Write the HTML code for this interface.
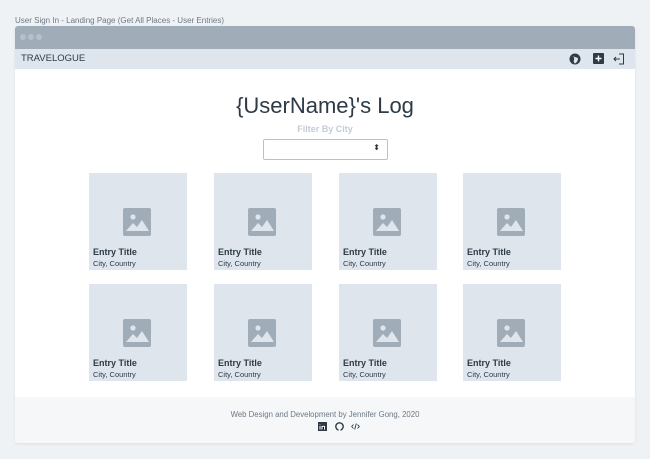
<!DOCTYPE html>
<html><head><style>
*{margin:0;padding:0;box-sizing:border-box}
body{width:650px;height:459px;background:#eff2f5;font-family:"Liberation Sans",sans-serif;position:relative;overflow:hidden;color:#2e3a46}
.cap{position:absolute;left:15px;top:16px;font-size:8px;color:#6c7986}
.win{position:absolute;left:15px;top:26px;width:620px;height:417px;background:#fff;border-radius:3px;overflow:hidden;box-shadow:0 1px 3px rgba(0,0,0,.08)}
.tb{height:23px;background:#a0adb8;position:relative}
.tb i{position:absolute;top:8px;width:6px;height:6px;border-radius:50%;background:#b6c0ca}
.nav{height:20px;background:#dfe5ec;position:relative;font-size:9.5px;line-height:20px;padding-left:6px;color:#2e3a46}
.h1{position:absolute;top:67px;width:100%;text-align:center;font-size:22px;color:#2e3a46}
.fl{position:absolute;top:98px;width:100%;text-align:center;font-size:9px;font-weight:bold;color:#c3ccd6}
.sel{position:absolute;left:248px;top:113px;width:125px;height:21px;border:1px solid #b9c2cc;border-radius:2px}
.sel span{position:absolute;right:7px;top:3px;font-size:8px;color:#333}
.card{position:absolute;width:98px;height:97px;background:#dfe5ec}
.card svg{position:absolute;left:34px;top:35px}
.card b{position:absolute;left:4px;top:74px;font-size:9px;color:#2e3a46}
.card em{position:absolute;left:4px;top:86px;font-size:7.5px;font-style:normal;color:#2e3a46}
.ft{position:absolute;left:0;top:371px;width:620px;height:46px;background:#f5f7f9;text-align:center}
.ft p{font-size:7.8px;color:#6c7986;margin-top:13px}
</style></head><body>
<div class="cap">User Sign In - Landing Page (Get All Places - User Entries)</div>
<div class="win">
<div class="tb"><i style="left:5px"></i><i style="left:13px"></i><i style="left:21px"></i></div>
<div class="nav">TRAVELOGUE
<svg style="position:absolute;left:554px;top:4px" width="12" height="12" viewBox="0 0 12 12"><circle cx="6" cy="6" r="5.5" fill="#2e3a46"/><path d="M3 3 Q6 4 5 7 Q4 9 6 10.5 Q9 9 9 5" fill="#dfe5ec"/></svg>
<svg style="position:absolute;left:578px;top:4px" width="11" height="11" viewBox="0 0 11 11"><rect width="11" height="11" rx="1" fill="#2e3a46"/><path d="M5.5 2.5v6M2.5 5.5h6" stroke="#fff" stroke-width="1.4"/></svg>
<svg style="position:absolute;left:598px;top:4px" width="12" height="12" viewBox="0 0 12 12" fill="none" stroke="#2e3a46" stroke-width="1"><path d="M6 1h4.5v10H6M1 6h6M3 4L1 6l2 2"/></svg>
</div>
<div class="h1">{UserName}'s Log</div>
<div class="fl">Filter By City</div>
<div class="sel"><span>⬍</span></div>
<div id="cards"></div>
<div class="ft"><p>Web Design and Development by Jennifer Gong, 2020</p>
<svg style="position:absolute;left:303px;top:25px" width="9" height="9" viewBox="0 0 9 9"><rect width="9" height="9" fill="#2e3a46"/><path d="M2 4v3.5M2 2.5v.5M4 7.5V4m0 1.2q1-1.4 2.5-.7v3" stroke="#fff" stroke-width="1"/></svg>
<svg style="position:absolute;left:320px;top:25px" width="9" height="9" viewBox="0 0 9 9"><circle cx="4.5" cy="4.5" r="3.7" fill="none" stroke="#2e3a46" stroke-width="1.4"/><rect x="3.5" y="6" width="2" height="3" fill="#f5f7f9"/></svg>
<svg style="position:absolute;left:336px;top:25px" width="9" height="9" viewBox="0 0 9 9" fill="none" stroke="#2e3a46" stroke-width=".9"><path d="M2.5 2.5L.7 4.5l1.8 2M6.5 2.5l1.8 2-1.8 2M5.3 1.5L3.7 7.5"/></svg>
</div>
</div>
<script>
var xs=[74,199,324,448],ys=[147,258],h='';
ys.forEach(function(y){xs.forEach(function(x){h+='<div class="card" style="left:'+x+'px;top:'+y+'px"><svg width="28" height="28" viewBox="0 0 28 28"><rect width="28" height="28" rx="2" fill="#a0adb8"/><circle cx="10" cy="9" r="2.6" fill="#dfe5ec"/><path d="M3 23l7-8 4 4 5-7 7 11z" fill="#dfe5ec"/></svg><b>Entry Title</b><em>City, Country</em></div>';});});
document.getElementById('cards').innerHTML=h;
</script>
</body></html>
